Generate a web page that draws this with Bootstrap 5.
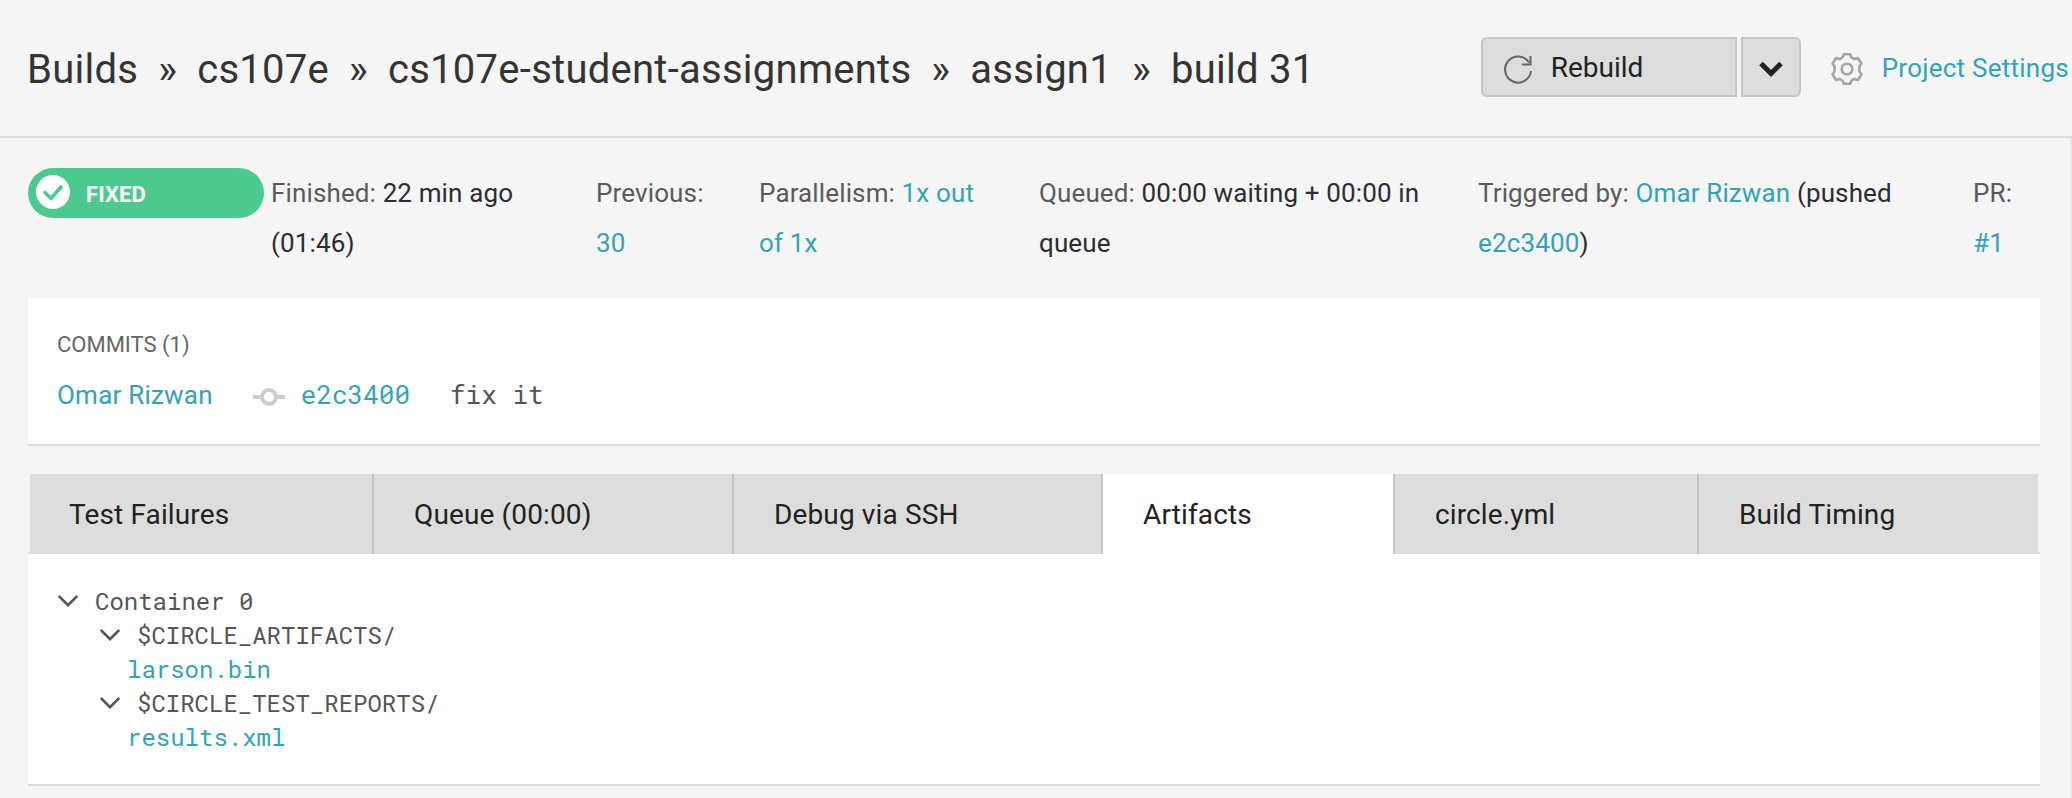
<!DOCTYPE html>
<html lang="en">
<head>
<meta charset="utf-8">
<meta name="viewport" content="width=device-width, initial-scale=1">
<title>Build 31</title>
<link href="https://cdn.jsdelivr.net/npm/bootstrap@5.3.0/dist/css/bootstrap.min.css" rel="stylesheet">
<style>
  body { background: #f5f5f5; color: #2b2d33; font: 400 26px/50px Roboto, sans-serif; letter-spacing: .13px; height: 798px; overflow: hidden; }
  a { color: #34a2b8; text-decoration: none; }
  .page-head { height: 138px; border-bottom: 2px solid #ddd; padding: 0 3px 0 27px; }
  .crumbs { --bs-breadcrumb-divider: "»"; --bs-breadcrumb-margin-bottom: 0; font-size: 40px; line-height: 60px; letter-spacing: .26px; white-space: nowrap; padding-top: 3px; }
  .crumbs .breadcrumb-item { padding: 0; color: #343434; }
  .crumbs .breadcrumb-item a { color: inherit; }
  .crumbs .breadcrumb-item + .breadcrumb-item::before { padding: 0 20px; color: #343434; }
  .btn-build { --bs-btn-bg: #ddd; --bs-btn-border-color: #c6c6c6; --bs-btn-border-width: 2px; --bs-btn-color: #222; --bs-btn-font-size: 28px; --bs-btn-line-height: 56px; --bs-btn-padding-y: 0; --bs-btn-border-radius: 6px; height: 60px; margin-bottom: 2px; }
  .btn-main { width: 256px; --bs-btn-padding-x: 19px; }
  .btn-main svg { margin: 3px 17px 0 0; }
  .btn-main span { padding-top: 1px; }
  .btn-caret { width: 60px; --bs-btn-padding-x: 0; }
  .btn-caret svg { margin-top: 3px; }
  .settings { letter-spacing: .25px; }
  .settings svg { margin: 2px 18px 0 29px; }
  .page-body { height: 660px; border-right: 2px solid #e8e8e8; padding: 30px 30px 0 28px; }
  .pill { width: 236px; height: 50px; background: #4bc98e; color: #fff; font-size: 22px; font-weight: 700; padding: 0 0 0 8px; }
  .pill svg { margin-bottom: 2px; }
  .pill span { padding-top: 3px; }
  .facts { display: grid; grid-template-columns: 243px 325px 163px 280px 439px 495px 1fr; height: 130px; }
  .facts dt { display: inline; font-weight: 400; color: #5a5a5a; }
  .facts dd { display: inline; margin: 0; }
  .panel { background: #fff; border-bottom: 2px solid #ddd; }
  .commits { height: 148px; padding: 29px 29px 0; }
  .commits h2 { font-size: 22px; line-height: 36px; letter-spacing: 0; color: #666; margin: 0 0 7px; }
  .author { letter-spacing: .22px; }
  .commit-dot { margin: 3px 16px 0 40px; }
  .code { font-family: "Roboto Mono", "Liberation Mono", monospace; letter-spacing: 0; }
  .commits .code { margin-top: -2px; }
  .message { color: #555; margin-left: 40px; }
  .tabs-row { --bs-nav-tabs-border-width: 0; --bs-nav-link-padding-x: 40px; --bs-nav-link-padding-y: 0; display: grid; grid-template-columns: 342px 360px 369px 292px 304px 1fr; margin-top: 28px; padding: 0 2px; background: linear-gradient(#ddd, #ddd) bottom / 100% 2px no-repeat; border: 0; height: 80px; }
  .tabs-row .nav-link { height: 80px; width: 100%; background: #ddd; color: #222; font-size: 28px; line-height: 82px; text-align: left; border: 0; border-radius: 0; margin: 0; }
  .tabs-row .nav-item + .nav-item .nav-link { border-left: 2px solid #c6c6c6; }
  .tabs-row .nav-item:first-child .nav-link { padding-left: 39px; }
  .tabs-row .nav-link.active { background: #fff; color: #222; }
  .tree { height: 232px; padding: 30px 28px 0 30px; font-size: 24px; line-height: 34px; color: #555; }
  .tree ul { padding-left: 42px; }
  .tree ul ul { padding-left: 27px; }
  .tree .node { display: flex; align-items: center; gap: 17px; }
</style>
</head>
<body>
<header class="page-head d-flex align-items-center justify-content-between">
  <nav aria-label="breadcrumb">
    <ol class="breadcrumb crumbs flex-nowrap">
      <li class="breadcrumb-item"><a href="#">Builds</a></li>
      <li class="breadcrumb-item"><a href="#">cs107e</a></li>
      <li class="breadcrumb-item"><a href="#">cs107e-student-assignments</a></li>
      <li class="breadcrumb-item"><a href="#">assign1</a></li>
      <li class="breadcrumb-item"><a href="#">build 31</a></li>
    </ol>
  </nav>
  <div class="d-flex align-items-center">
    <button class="btn btn-build btn-main rounded-end-0 d-flex align-items-center me-1">
      <svg width="32" height="32" viewBox="0 0 32 32" fill="none" stroke="#666" stroke-width="2"><path d="M29 18A13 13 0 1 1 27 9.500M28.500 3v8.500H20"/></svg>
      <span>Rebuild</span>
    </button>
    <button class="btn btn-build btn-caret rounded-start-0 d-flex align-items-center justify-content-center" aria-label="More rebuild options">
      <svg width="24" height="18" viewBox="0 0 24 18" fill="none" stroke="#222" stroke-width="5"><path d="M2 3.500l10 10 10-10"/></svg>
    </button>
    <a href="#" class="settings d-flex align-items-center">
      <svg width="34" height="34" viewBox="-17 -17 34 34" fill="none" stroke="#a6a6a6" stroke-width="2.600" stroke-linejoin="round"><circle r="5.300"/><path d="M-3.200 -14.800H3.200L4.400 -11.600 7.400 -9.900 10.900 -11 14.500 -5.300 12.400 -2.500V2.500L14.500 5.300 10.900 11 7.400 9.900 4.400 11.600 3.200 14.800H-3.200L-4.400 11.600 -7.400 9.900 -10.900 11 -14.500 5.300 -12.400 2.500V-2.500L-14.500 -5.300 -10.900 -11 -7.400 -9.900 -4.400 -11.600Z"/></svg>
      <span>Project Settings</span>
    </a>
  </div>
</header>

<main class="page-body">
  <div class="facts">
    <div class="pill rounded-pill d-flex align-items-center">
      <svg width="34" height="34" viewBox="0 0 34 34"><circle cx="17" cy="17" r="17" fill="#fff"/><path d="M9 17.500l6 6L25 12" fill="none" stroke="#4bc98e" stroke-width="3.600" stroke-linecap="round" stroke-linejoin="round"/></svg>
      <span class="ms-3">FIXED</span>
    </div>
    <dl class="m-0"><dt>Finished:</dt> <dd>22 min ago<br>(01:46)</dd></dl>
    <dl class="m-0"><dt>Previous:</dt><br><dd><a href="#">30</a></dd></dl>
    <dl class="m-0"><dt>Parallelism:</dt> <dd><a href="#">1x out<br>of 1x</a></dd></dl>
    <dl class="m-0"><dt>Queued:</dt> <dd>00:00 waiting + 00:00 in<br>queue</dd></dl>
    <dl class="m-0"><dt>Triggered by:</dt> <dd><a href="#">Omar Rizwan</a> (pushed<br><a href="#">e2c3400</a>)</dd></dl>
    <dl class="m-0"><dt>PR:</dt><br><dd><a href="#">#1</a></dd></dl>
  </div>

  <section class="panel commits">
    <h2 class="fw-normal">COMMITS (1)</h2>
    <div class="d-flex align-items-center">
      <a href="#" class="author">Omar Rizwan</a>
      <svg class="commit-dot" width="32" height="20" viewBox="0 0 32 20" fill="none" stroke="#ccc" stroke-width="4"><circle cx="16" cy="10" r="7"/><path d="M0 10h9M23 10h9"/></svg>
      <a href="#" class="code">e2c3400</a>
      <span class="code message">fix it</span>
    </div>
  </section>

  <ul class="nav nav-tabs tabs-row">
    <li class="nav-item"><a class="nav-link" href="#">Test Failures</a></li>
    <li class="nav-item"><a class="nav-link" href="#">Queue (00:00)</a></li>
    <li class="nav-item"><a class="nav-link" href="#">Debug via SSH</a></li>
    <li class="nav-item"><a class="nav-link active" href="#">Artifacts</a></li>
    <li class="nav-item"><a class="nav-link" href="#">circle.yml</a></li>
    <li class="nav-item"><a class="nav-link" href="#">Build Timing</a></li>
  </ul>
  <section class="panel tree code">
    <div class="node"><svg width="20" height="12" viewBox="0 0 20 12" fill="none" stroke="#555" stroke-width="2.600"><path d="M.8 1l9.200 9.200L19.200 1"/></svg>Container 0</div>
    <ul class="list-unstyled m-0">
      <li>
        <div class="node"><svg width="20" height="12" viewBox="0 0 20 12" fill="none" stroke="#555" stroke-width="2.600"><path d="M.8 1l9.200 9.200L19.200 1"/></svg>$CIRCLE_ARTIFACTS/</div>
        <ul class="list-unstyled m-0"><li><a href="#">larson.bin</a></li></ul>
      </li>
      <li>
        <div class="node"><svg width="20" height="12" viewBox="0 0 20 12" fill="none" stroke="#555" stroke-width="2.600"><path d="M.8 1l9.200 9.200L19.200 1"/></svg>$CIRCLE_TEST_REPORTS/</div>
        <ul class="list-unstyled m-0"><li><a href="#">results.xml</a></li></ul>
      </li>
    </ul>
  </section>
</main>
<script src="https://cdn.jsdelivr.net/npm/bootstrap@5.3.0/dist/js/bootstrap.bundle.min.js"></script>
</body>
</html>
